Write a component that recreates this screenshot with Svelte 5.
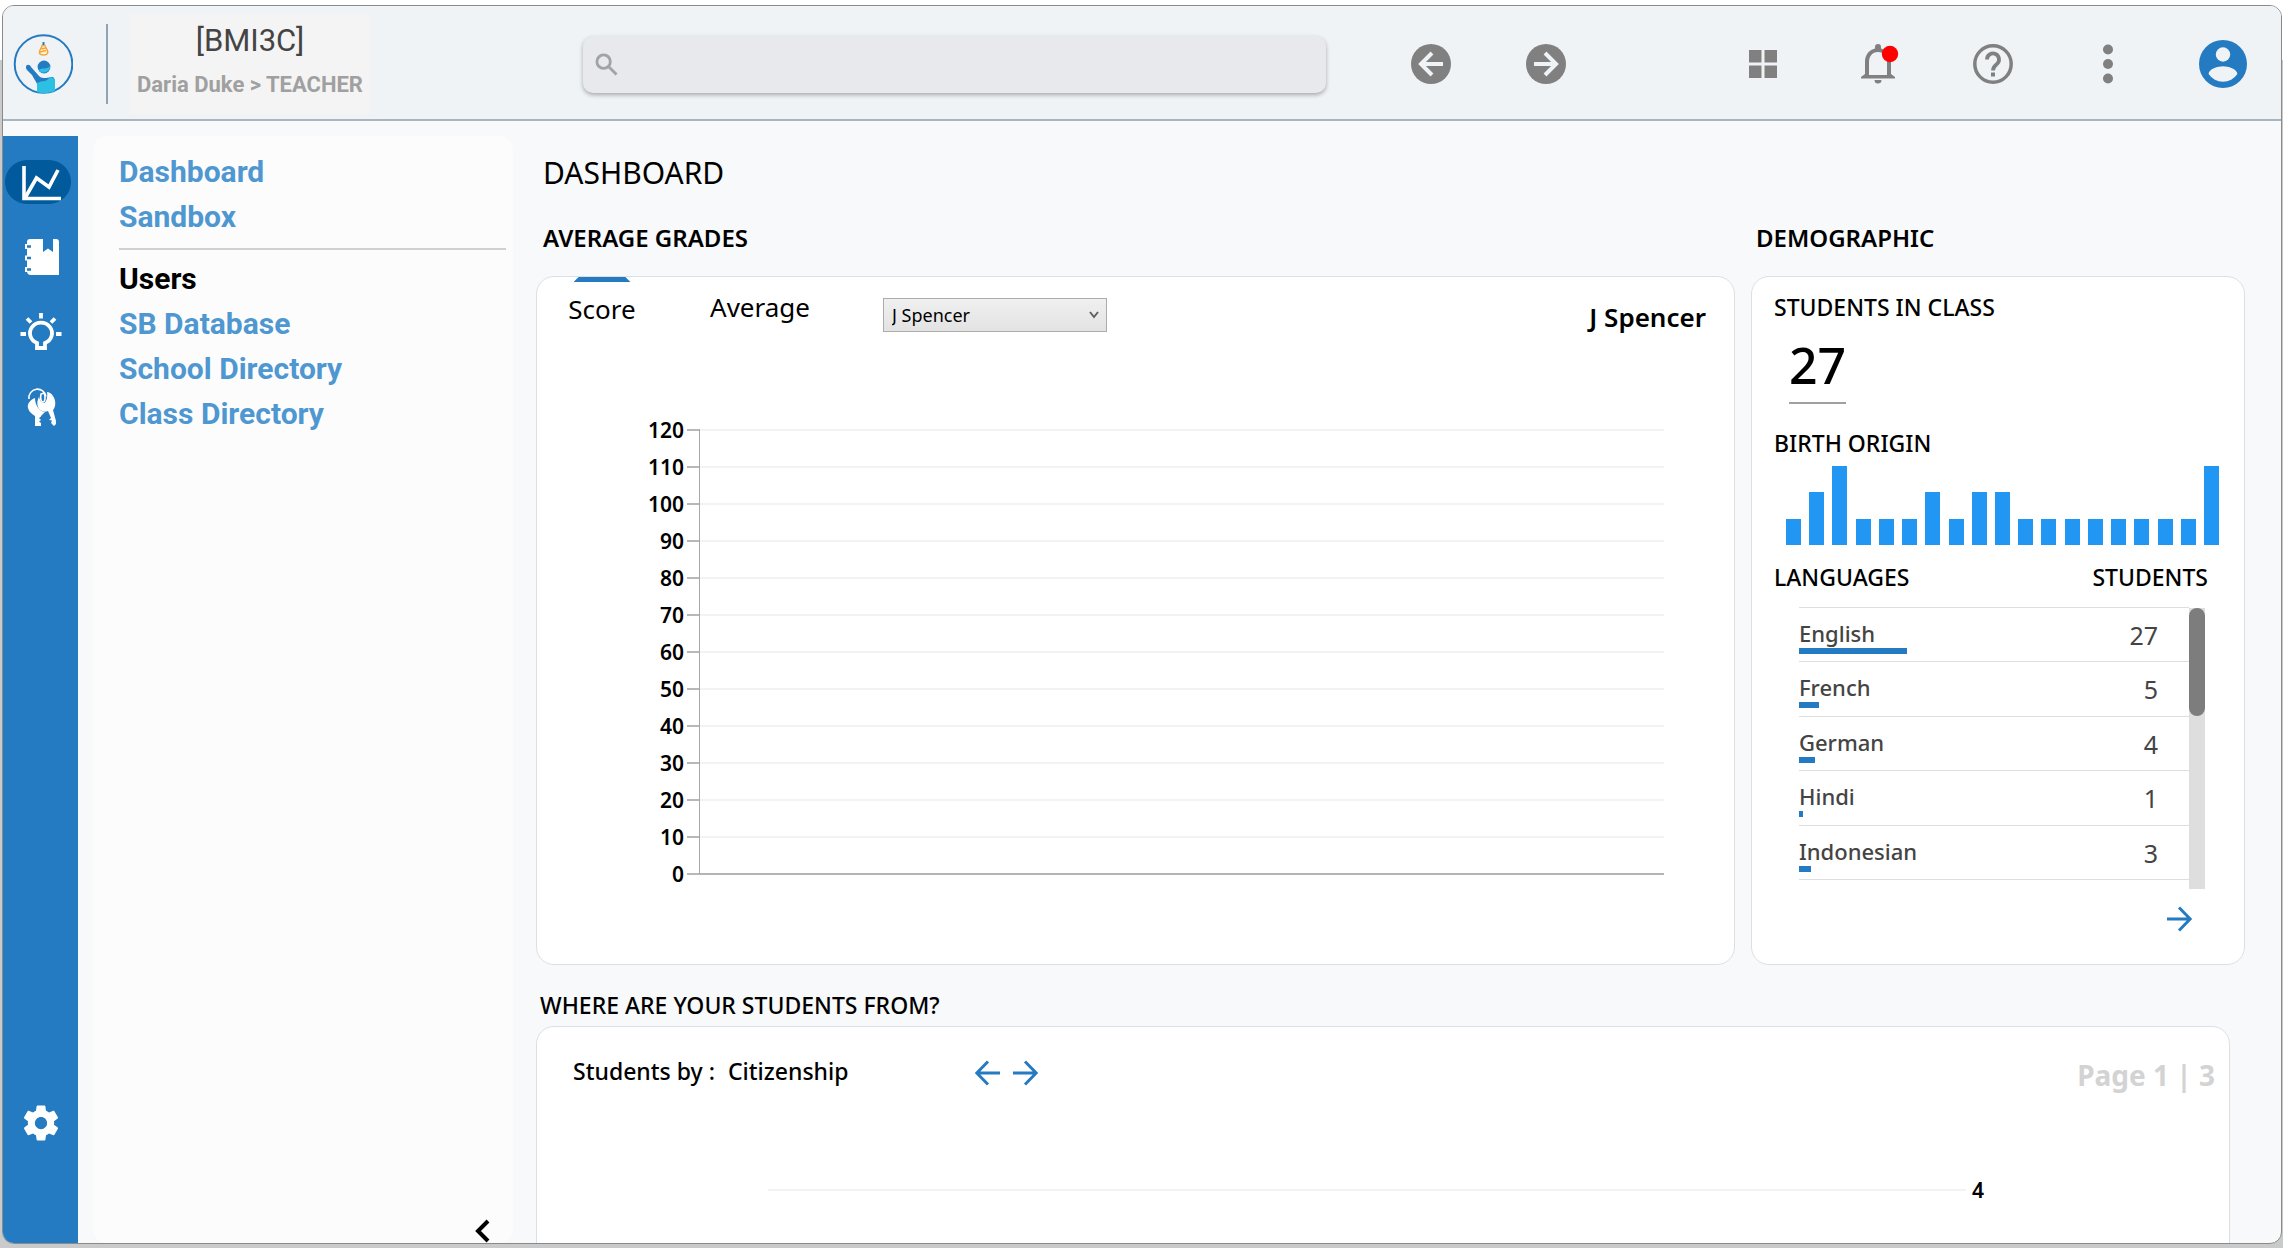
<script>
  const navTop = ['Dashboard', 'Sandbox'];
  const navUsers = ['SB Database', 'School Directory', 'Class Directory'];
  const ticks = [120, 110, 100, 90, 80, 70, 60, 50, 40, 30, 20, 10, 0];
  const origins = [1, 2, 3, 1, 1, 1, 2, 1, 2, 2, 1, 1, 1, 1, 1, 1, 1, 1, 3];
  const languages = [
    { name: 'English', students: 27 },
    { name: 'French', students: 5 },
    { name: 'German', students: 4 },
    { name: 'Hindi', students: 1 },
    { name: 'Indonesian', students: 3 }
  ];
  let student = $state('J Spencer');
</script>

{#snippet arrow(dir)}
  <svg class="arrow" viewBox="0 0 26 26" aria-hidden="true">
    {#if dir === 'left'}
      <path d="M25 13H2M13 1.5 1.8 13 13 24.5" />
    {:else}
      <path d="M1 13H24M13 1.5 24.2 13 13 24.5" />
    {/if}
  </svg>
{/snippet}

<div class="desktop">
  <div class="window">
    <header>
      <a class="logo" href="#home" aria-label="Home">
        <svg viewBox="0 0 60 60">
          <circle cx="30.500" cy="30" r="28.8" fill="none" stroke="#257bc1" stroke-width="2" />
          <path d="M13 33c0-3 4-3 5 0l8 9c2 2 4 2 7 2l6-1c2 0 3 2 3 5v9c-5 2-13 3-18 1v-8c-1-3-3-5-5-9l-5-5c-1-1-1-2-1-3z" fill="#257bc1" />
          <path d="M24 49c5-3 9 0 13-6l3 1c2 1 2 3 2 5v8c-5 2-13 3-18 1z" fill="#2bc0e4" />
          <circle cx="31" cy="33" r="6.400" fill="#257bc1" />
          <path d="M25.500 36c4-3 8 0 11.500-4a6.400 6.400 0 0 1-11.500 4z" fill="#2bc0e4" />
          <path d="M29 11.500c0 3-4 5-2.500 8 1.500 2 7 2 8 0 1.500-3-2-5-2.500-8zM28.500 15l4-1M27 18l6-1.500" fill="#fff3d8" stroke="#f5a53a" stroke-width="1.400" />
          <path d="M30.500 8v3" stroke="#257bc1" stroke-width="2" />
        </svg>
      </a>
      <span class="divider"></span>
      <div class="identity">
        <span class="course">[BMI3C]</span>
        <span class="role">Daria Duke &gt; TEACHER</span>
      </div>
      <label class="search">
        <svg viewBox="0 0 24 24" aria-hidden="true">
          <circle cx="9" cy="9" r="7" />
          <path d="M14 14l8.500 8.500" />
        </svg>
        <input type="search" aria-label="Search" />
      </label>
      <div class="icons history">
        <button aria-label="Back">
          <svg viewBox="0 0 48 48"><circle cx="24" cy="24" r="20" fill="#808080" /><path d="M36 24H15M25 13 14 24l11 11" fill="none" stroke="#eff3f6" stroke-width="4" /></svg>
        </button>
        <button aria-label="Forward">
          <svg viewBox="0 0 48 48"><circle cx="24" cy="24" r="20" fill="#808080" /><path d="M12 24h21M23 13l11 11-11 11" fill="none" stroke="#eff3f6" stroke-width="4" /></svg>
        </button>
      </div>
      <div class="icons">
        <button aria-label="Apps">
          <svg viewBox="0 0 48 48"><path d="M10 10h12.500v12.500H10zM25.500 10H38v12.500H25.500zM10 25.500h12.500V38H10zM25.500 25.500H38V38H25.500z" fill="#808080" /></svg>
        </button>
        <button aria-label="Notifications">
          <svg viewBox="0 0 48 48">
            <path d="M20.500 40h7a3.500 3.500 0 0 1-7 0zM24 4a3 3 0 0 0-3 3v1.600C15 10 11 15 11 22v12l-4 3v1.500h34V37l-4-3V22c0-7-4-12-10-13.400V7a3 3 0 0 0-3-3zm0 8c6 0 9 4.500 9 10v13H15V22c0-5.500 3-10 9-10z" fill="#808080" fill-rule="evenodd" />
            <circle cx="36" cy="14" r="8.200" fill="red" />
          </svg>
        </button>
        <button aria-label="Help">
          <svg viewBox="0 0 48 48" fill="none" stroke="#808080"><circle cx="24" cy="24" r="18.200" stroke-width="3.500" /><path d="M18 19.500a6 6 0 1 1 9.800 4.600C25.500 26 24 27 24 30.500" stroke-width="3.800" /><path d="M24 32.500v4" stroke-width="4" /></svg>
        </button>
        <button aria-label="More">
          <svg viewBox="0 0 48 48" fill="#808080"><circle cx="24" cy="9.500" r="5" /><circle cx="24" cy="24" r="5" /><circle cx="24" cy="38.500" r="5" /></svg>
        </button>
        <button aria-label="Profile">
          <svg viewBox="0 0 48 48"><circle cx="24" cy="24" r="24" fill="#257bc1" /><circle cx="24" cy="14.500" r="7.200" fill="#eff3f6" /><path d="M9.600 34c0-5 9.600-7.700 14.400-7.700S38.400 29 38.400 34a17.300 17.300 0 0 1-28.800 0z" fill="#eff3f6" /></svg>
        </button>
      </div>
    </header>

    <div class="body">
      <nav class="rail" aria-label="Sections">
        <button class="active" aria-label="Statistics">
          <svg viewBox="0 0 40 40" fill="none" stroke="#fff" stroke-width="3.600"><path d="M3 4v32.500h37" /><path d="M4 36 15.500 16l12.500 9L37 8" /></svg>
        </button>
        <button aria-label="Notebook">
          <svg viewBox="0 0 40 40"><path d="M6 5a3 3 0 0 1 3-3h13v13l5-3.500 5 3.500V2h3a3 3 0 0 1 3 3v33H10a4 4 0 0 1-4-4z" fill="#fff" /><path d="M4 9.500h5M4 21h5M4 32.500h5" stroke="#fff" stroke-width="5" /><path d="M6 9.500h4M6 21h4M6 32.500h4" stroke="#257bc1" stroke-width="2.400" /></svg>
        </button>
        <button aria-label="Ideas">
          <svg viewBox="0 0 40 40" fill="none" stroke="#fff" stroke-width="3.800"><path d="M16 36v-5a11 10.500 0 1 1 8 0v5z" /><path d="M20 1v5.500M6 6.500l4 4M34 6.500l-4 4M-.500 22H5M40.500 22H35" /></svg>
        </button>
        <button aria-label="Keys">
          <svg viewBox="0 0 40 40">
            <path d="M8 12a8.500 8.500 0 0 1 17-2.500" fill="none" stroke="#fff" stroke-width="1.600" />
            <path d="M14 11c-5 2-8 6-7 10 1 4 4 6 7 8v10h6v-3l-2-1.500 2-1.500-2-2 2-1.500V29l4-4c-6-1-10-7-10-14z" fill="#fff" />
            <path d="M18 10c-3 5-2 12 3 14 2 1 4 1 6 0l3 7-2 2 3 .500-1 2.500 3 3 2-2v-3l-3-11c3-3 3-10 0-14-2-3-4-4-6-4 1 5-1 11-3 11-3 0-4-3-5-6z" fill="#fff" />
            <path d="M20 7c-1 4 0 8 2 8s3-5 1-9z" fill="none" stroke="#fff" stroke-width="1.600" />
          </svg>
        </button>
        <button class="settings" aria-label="Settings">
          <svg viewBox="0 0 24 24" fill="#fff"><path d="M19.430 12.980c.040-.320.070-.640.070-.980s-.030-.660-.070-.980l2.110-1.650c.190-.150.240-.420.120-.640l-2-3.460c-.120-.220-.390-.300-.610-.220l-2.490 1c-.520-.400-1.080-.730-1.690-.980l-.380-2.650C14.460 2.180 14.250 2 14 2h-4c-.250 0-.460.180-.490.420l-.380 2.650c-.610.250-1.170.590-1.690.980l-2.490-1c-.230-.090-.490 0-.610.220l-2 3.460c-.130.220-.070.490.120.640l2.110 1.650c-.040.320-.070.650-.070.980s.030.660.070.980l-2.110 1.650c-.190.150-.240.420-.120.640l2 3.460c.120.220.390.300.610.220l2.490-1c.520.400 1.080.730 1.690.980l.380 2.650c.030.240.240.420.490.420h4c.250 0 .460-.180.490-.420l.380-2.650c.610-.250 1.170-.590 1.690-.980l2.490 1c.230.090.490 0 .610-.220l2-3.460c.120-.220.070-.490-.120-.640l-2.110-1.650zM12 15.500c-1.930 0-3.500-1.570-3.500-3.500s1.570-3.500 3.500-3.500 3.500 1.570 3.500 3.500-1.570 3.500-3.500 3.500z" /></svg>
        </button>
      </nav>

      <aside>
        <nav class="links" aria-label="Pages">
          {#each navTop as item}<a href="#{item}">{item}</a>{/each}
          <hr />
          <h2>Users</h2>
          {#each navUsers as item}<a href="#{item}">{item}</a>{/each}
        </nav>
        <button class="collapse" aria-label="Collapse menu">
          <svg viewBox="0 0 16 24"><path d="M14 2 4 12l10 10" fill="none" stroke="#000" stroke-width="4" /></svg>
        </button>
      </aside>

      <main>
        <h1>DASHBOARD</h1>
        <div class="columns">
          <section>
            <h3>AVERAGE GRADES</h3>
            <div class="card grades">
              <div class="toolbar">
                <button class="tab selected">Score</button>
                <button class="tab">Average</button>
                <span class="picker">
                  <select aria-label="Student" bind:value={student}>
                    <option>J Spencer</option>
                  </select>
                  <svg viewBox="0 0 10 8" aria-hidden="true"><path d="M1 1l4 5 4-5" /></svg>
                </span>
                <strong>{student}</strong>
              </div>
              <div class="chart">
                {#each ticks as tick}
                  <div class="tick"><span>{tick}</span><i class="mark"></i><i class="rule"></i></div>
                {/each}
              </div>
            </div>
          </section>

          <section>
            <h3 class="inset">DEMOGRAPHIC</h3>
            <div class="card demographic">
              <h4>STUDENTS IN CLASS</h4>
              <div class="total">27</div>
              <h4>BIRTH ORIGIN</h4>
              <div class="bars">
                {#each origins as n}<i style:height="{(n / 3) * 100}%"></i>{/each}
              </div>
              <div class="heads"><h4>LANGUAGES</h4><h4>STUDENTS</h4></div>
              <div class="scroller">
                <table aria-label="Students by language">
                  <tbody>
                    {#each languages as l}
                      <tr>
                        <th scope="row">{l.name}<i style:width="{l.students * 4}px"></i></th>
                        <td>{l.students}</td>
                      </tr>
                    {/each}
                  </tbody>
                </table>
                <div class="track"><div class="thumb"></div></div>
              </div>
              <button class="more" aria-label="More languages">{@render arrow('right')}</button>
            </div>
          </section>
        </div>

        <section class="origin">
          <h3>WHERE ARE YOUR STUDENTS FROM?</h3>
          <div class="card">
            <div class="filter">
              <span class="by">Students by :</span>
              <span class="field">Citizenship</span>
              <button aria-label="Previous">{@render arrow('left')}</button>
              <button aria-label="Next">{@render arrow('right')}</button>
              <span class="page">Page 1 | 3</span>
            </div>
            <div class="level"><i class="rule"></i><span>4</span></div>
          </div>
        </section>
      </main>
    </div>
  </div>
</div>

<style>
  :global(body) { margin: 0; background: #fff; }
  * { box-sizing: border-box; }
  button { border: 0; padding: 0; background: none; font: inherit; color: inherit; cursor: pointer; }
  svg { display: block; }
  h1, h2, h3, h4 { margin: 0; }

  .desktop {
    height: 100vh;
    padding: 5px 1px 4px 2px;
    background: linear-gradient(#fff 60px, #cacaca 60px);
    font-family: 'Noto Sans', 'Open Sans', sans-serif;
    color: #000;
  }
  .window {
    display: flex;
    flex-direction: column;
    height: 100%;
    border: 1px solid #8a8a8a;
    border-radius: 12px;
    overflow: hidden;
    background: #f7f9fb;
  }

  header {
    display: flex;
    align-items: center;
    flex: none;
    height: 115px;
    padding: 3px 34px 0 10px;
    background: #eff3f6;
    border-bottom: 2px solid #a9b5c1;
  }
  .logo { width: 60px; }
  .divider { width: 2px; height: 80px; margin: 0 22px 0 33px; background: #93a3b3; }
  .identity {
    display: flex;
    flex-direction: column;
    align-items: center;
    width: 240px;
    height: 100px;
    padding-top: 7px;
    background: #f4f4f4;
    font-family: Roboto, sans-serif;
  }
  .course { font-size: 31px; line-height: 40px; color: #444; }
  .role { margin-top: 8px; font-size: 22px; line-height: 32px; font-weight: 700; color: #a0a0a0; white-space: nowrap; }
  .search {
    display: flex;
    align-items: center;
    flex: 1;
    height: 57px;
    margin: 0 81px 0 213px;
    padding: 0 12px;
    gap: 10px;
    border-radius: 10px;
    background: #e8e9ed;
    box-shadow: 0 2px 4px rgba(0, 0, 0, 0.3);
  }
  .search svg { width: 23px; fill: none; stroke: #a3a3a3; stroke-width: 3; }
  .search input { flex: 1; height: 40px; border: 0; outline: 0; background: none; font: 20px 'Noto Sans', sans-serif; }
  .icons { display: flex; gap: 67px; }
  .icons button { width: 48px; height: 48px; }
  .history { margin-right: 169px; }

  .body { display: flex; flex: 1; min-height: 0; padding-top: 15px; }
  .rail {
    display: flex;
    flex-direction: column;
    align-items: flex-start;
    width: 75px;
    gap: 31px;
    padding: 24px 0 98px 2px;
    background: #257bc1;
  }
  .rail button { display: flex; align-items: center; justify-content: center; width: 66px; height: 44px; padding-left: 6px; border-radius: 22px; }
  .rail .active { background: #005a9b; }
  .rail svg { width: 40px; height: 40px; overflow: visible; }
  .rail .settings { margin-top: auto; }
  .rail .settings svg { width: 42px; height: 42px; }

  aside {
    display: flex;
    flex-direction: column;
    justify-content: space-between;
    width: 420px;
    margin-left: 15px;
    padding: 13px 7px 0 26px;
    border-radius: 14px;
    background: #fcfcfc;
  }
  .links { display: flex; flex-direction: column; font: 700 30px/45px Roboto, sans-serif; }
  .links a { color: #4f97d0; text-decoration: none; }
  .links h2 { font: inherit; }
  hr { width: 100%; height: 2px; margin: 9px 0 6px; border: 0; background: #d0d0d0; }
  .collapse { align-self: flex-end; margin-right: 16px; }
  .collapse svg { width: 16px; height: 24px; }

  main { flex: 1; min-width: 0; padding: 17px 36px 0 23px; }
  h1 { padding-left: 7px; font-size: 30px; line-height: 40px; font-weight: 400; }
  .columns { display: grid; grid-template-columns: 1fr 494px; gap: 16px; margin-top: 29px; }
  h3 { margin-bottom: 22px; padding-left: 7px; font-size: 24px; line-height: 32px; font-weight: 600; }
  h4 { font-size: 23px; line-height: 32px; font-weight: 500; }
  .card { border: 1px solid #dcdfe3; border-radius: 18px; background: #fff; }
  .grades, .demographic { height: 689px; }

  .toolbar { display: flex; align-items: flex-start; height: 116px; padding: 0 28px 0 31px; }
  .tab { display: flex; flex-direction: column; align-items: center; width: 70px; padding-top: 14px; font-size: 26px; line-height: 32px; font-weight: 400; }
  .tab.selected { width: 68px; padding-top: 0; margin-right: 73px; }
  .tab.selected::before { content: ''; width: 57px; height: 5px; margin-bottom: 11px; background: #257bc1; clip-path: polygon(9% 0, 91% 0, 100% 100%, 0 100%); }
  .tab + .tab { width: 102px; margin-right: 72px; }
  .picker { position: relative; width: 224px; margin-top: 21px; }
  .picker select {
    width: 100%;
    height: 34px;
    padding: 0 8px;
    border: 1px solid #acacac;
    border-radius: 0;
    appearance: none;
    background: linear-gradient(#f0f0f0, #e3e3e3);
    font: 18px 'Noto Sans', sans-serif;
    color: #000;
  }
  .picker svg { position: absolute; right: 8px; top: 13px; width: 10px; height: 8px; fill: none; stroke: #606060; stroke-width: 2; }
  .toolbar strong { margin: 22px 0 0 auto; font-size: 26px; line-height: 36px; font-weight: 600; }

  .chart { position: relative; margin-top: 18px; padding-right: 70px; }
  .chart::before { content: ''; position: absolute; left: 162px; top: 18px; bottom: 18px; width: 1px; background: #a8a8a8; }
  .tick { display: flex; align-items: center; height: 37px; font-size: 21px; line-height: 36px; font-weight: 600; }
  .tick span { width: 147px; margin-right: 3px; text-align: right; }
  .mark { width: 13px; height: 2px; background: #b8b8b8; }
  .rule { flex: 1; height: 2px; background: #f3f3f3; }
  .tick:last-child .rule { background: #b4b4b4; }

  .demographic { display: flex; flex-direction: column; padding: 14px 36px 0 22px; }
  .total { align-self: flex-start; height: 81px; margin: 0 0 23px 15px; padding: 8px 0 0; border-bottom: 2px solid #a0a0a0; font-size: 50px; line-height: 68px; font-weight: 500; }
  .bars { display: flex; align-items: flex-end; justify-content: space-between; height: 79px; margin: 7px -11px 16px 12px; }
  .bars i { width: 15px; background: #2196f3; }
  .heads { display: flex; justify-content: space-between; margin-bottom: 14px; }
  .inset { padding-left: 5px; }
  .scroller { display: flex; height: 282px; margin: 0 3px 0 25px; align-items: flex-start; }
  table { flex: 1; height: 273px; border-collapse: collapse; color: #444; }
  tr { border-bottom: 1px solid #dedede; }
  tr:first-child { border-top: 1px solid #dedede; }
  th, td { padding: 0; text-align: left; font-weight: 500; vertical-align: top; }
  th { padding-top: 11px; font-size: 22px; line-height: 28px; }
  th i { display: block; height: 6px; margin-top: 1px; background: #257bc1; }
  td { padding: 10px 31px 0 0; font-size: 25px; line-height: 34px; font-weight: 400; text-align: right; }
  .track { width: 16px; height: 281px; margin-top: 1px; background: #dedede; }
  .thumb { height: 108px; border-radius: 8px; background: #7d7d7d; }
  .arrow { width: 26px; height: 26px; fill: none; stroke: #257bc1; stroke-width: 3; }
  .more { align-self: flex-end; margin: 17px 16px 0 0; }

  .origin { margin-top: 24px; padding-right: 15px; }
  .origin h3 { margin-bottom: 5px; padding-left: 4px; font-size: 23px; font-weight: 500; }
  .origin .card { height: 520px; }
  .filter { display: flex; align-items: center; height: 60px; margin-top: 16px; padding: 0 14px 0 36px; font-size: 23px; line-height: 32px; font-weight: 500; }
  .by { width: 155px; }
  .field { width: 247px; }
  .filter button { margin-right: 11px; }
  .filter .by, .filter .field { padding-bottom: 4px; }
  .page { margin-left: auto; padding-top: 4px; font-size: 28px; font-weight: 700; color: #d3d3d3; }
  .level { display: flex; align-items: center; gap: 6px; margin-top: 71px; padding: 0 245px 0 231px; font-size: 21px; line-height: 32px; font-weight: 600; }
</style>
